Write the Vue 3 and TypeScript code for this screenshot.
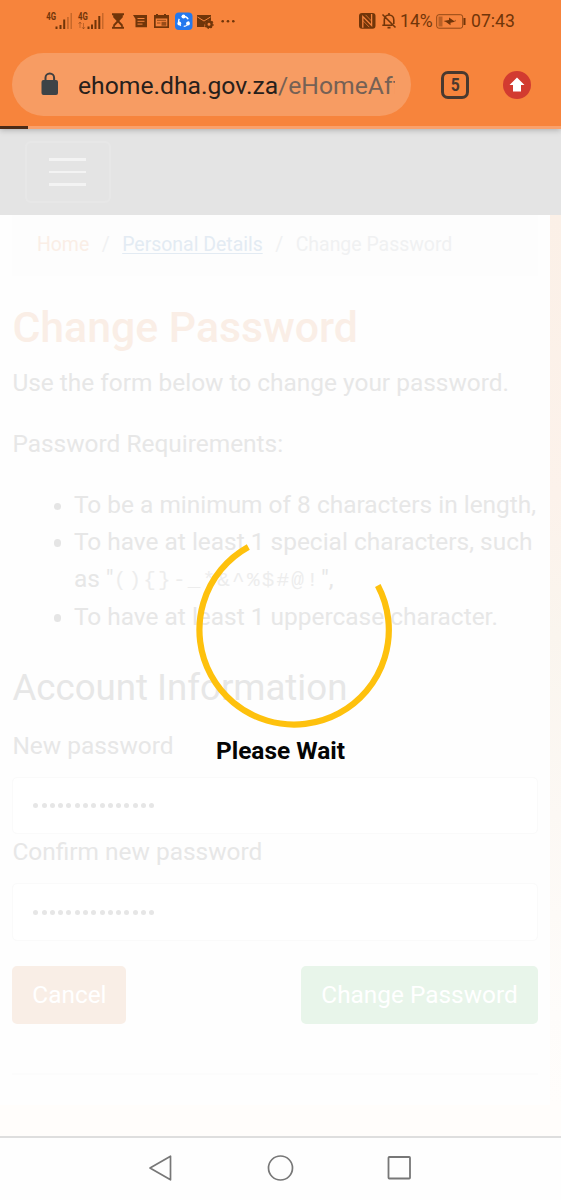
<script setup lang="ts">
const specials = '(){}-_*&^%$#@!'
const dotCount = 15
const fields: string[] = ['New password', 'Confirm new password']
</script>

<template>
  <div class="phone">
    <header class="chrome">
      <div class="status">
        <svg class="status-left" width="200" height="32" viewBox="0 0 200 32">
          <g fill="#713509">
            <text x="6.2" y="15" class="net" textLength="9.8" lengthAdjust="spacingAndGlyphs">4G</text>
            <path d="M15.5 21.5h2v2.500h-2zM19.500 20h2v4h-2zM23.200 14.500h2v9.500h-2z" />
            <path d="M27 12h1.800v12h-1.800zM30.500 8h1.500v16h-1.500z" opacity=".35" />
            <text x="38" y="15" class="net" textLength="9.800" lengthAdjust="spacingAndGlyphs">4G</text>
            <path d="M40 17v6m-1.500-4 1.500-2 1.500 2M43.500 18v6m-1.500-2 1.500 2 1.500-2" fill="none" stroke="#713509" opacity=".4" />
            <path d="M47.500 21.500h2v2.500h-2zM51 19.500h2v4.500h-2zM54.500 15h2v9h-2zM58.300 11h2v13h-2z" />
            <path d="M62 8h1.500v16H62z" opacity=".35" />
            <path d="M72 8.300h12v2h-1.200v2L79.300 16l3.500 3.800v2H84v2H72v-2h1.200v-2l3.500-3.800-3.500-3.700v-2H72z" />
            <path d="M78 17.500 74.800 21v.9h6.400V21z" fill="#f7843c" />
            <path d="M93 10h14v12.300H95.500V14z" />
            <path d="M97.500 13.500h7m-7 2.800h7m-7 2.800h5" stroke="#f7843c" stroke-width="1" />
            <path d="M114 10h2V9h2v1h6V9h2v1h3v13h-15z" />
            <path d="M115.700 13.500h11.600v7.800h-11.600z" fill="#f7843c" />
            <path d="M117 15.300h9M117 18h3.500" stroke="#713509" opacity=".7" />
            <path d="M121.500 16.800h4.800v3.900h-4.800z" opacity=".7" />
            <path d="M157 10h14v5.500a5.500 5.500 0 0 0-6.500 6.500H157z" />
            <path d="m157.500 12 6.500 4 6.500-4" fill="none" stroke="#f7843c" stroke-width="1" />
            <circle cx="169" cy="19.200" r="2.700" fill="none" stroke="#713509" stroke-width="2.400" />
            <circle cx="169" cy="19.200" r="4.100" fill="none" stroke="#713509" stroke-width="1.200" stroke-dasharray="1.600 1.540" />
            <circle cx="182.700" cy="16.200" r="1.300" /><circle cx="188" cy="16.200" r="1.300" /><circle cx="193.300" cy="16.200" r="1.300" />
          </g>
          <rect x="135" y="7.500" width="17.500" height="17.500" rx="4" fill="#2478ee" />
          <circle cx="143.600" cy="16.400" r="5" fill="none" stroke="#fff" stroke-width="1.400" stroke-dasharray="7.500 2.970" />
          <g fill="#fff"><circle cx="143.500" cy="11.500" r="1.900" /><circle cx="139.300" cy="18.500" r="1.900" /><circle cx="148" cy="18.500" r="1.900" /></g>
        </svg>
        <div class="status-right">
          <svg width="41" height="18" viewBox="0 0 41 18">
            <rect x="0" y="1" width="16.500" height="15.800" rx="3" fill="#713509" />
            <path d="M3.800 15.800V4.500l8.800 9V2" fill="none" stroke="#f7843c" stroke-width="1.300" />
            <path d="M6.500 2.800l6.100 6.300M3.800 8.500l6.500 6.700" stroke="#f7843c" stroke-width=".9" opacity=".8" />
            <path d="M25.300 13.200V8c0-3 2-5 4.700-5s4.800 2 4.800 5v4M23.300 13.200h10M30 3V1M28.500 15.600h3M23.500 2.500l13 13" fill="none" stroke="#713509" stroke-width="1.600" />
          </svg>
          <span class="pct">14%</span>
          <svg class="batt" width="30" height="15" viewBox="0 0 30 15">
            <rect x=".7" y=".7" width="26" height="13.500" rx="2.200" fill="none" stroke="#713509" stroke-width="1" opacity=".75" />
            <path d="M2.500 2.500h4v10h-4z" fill="#713509" opacity=".45" />
            <path d="m7.500 7 5.500-1V3.500L19.500 8V5.800l-1 1 1.500.7-5.500 1.200v2.500L10 8z" fill="#713509" />
            <path d="M28.500 4v7" stroke="#713509" stroke-width="2" />
          </svg>
          <span class="time">07:43</span>
        </div>
      </div>
      <div class="toolbar">
        <div class="address">
          <svg width="18" height="24" viewBox="0 0 18 24">
            <path d="M4.500 9V5.800a4.300 4.300 0 0 1 8.600 0V9" fill="none" stroke="#413f3f" stroke-width="2" />
            <rect x=".5" y="8" width="16.500" height="15" rx="2" fill="#3d4347" />
          </svg>
          <div class="url">ehome.dha.gov.za<span>/eHomeAff</span></div>
        </div>
        <div class="tabs"><span>5</span></div>
        <svg class="update" width="28" height="28" viewBox="0 0 28 28">
          <circle cx="14" cy="14" r="14" fill="#d23b30" />
          <path d="m14 6.500 7.500 7.500H18v6.500h-8V14H6.500z" fill="#fff" />
        </svg>
      </div>
      <div class="progress"><div class="progress-fill"></div></div>
    </header>

    <main class="page">
      <nav class="navbar">
        <button class="burger" aria-label="Menu"><i></i><i></i><i></i></button>
      </nav>
      <div class="backdrop">
        <div class="content">
          <div class="crumbs">
            <span class="home">Home</span><span class="sep">/</span><a>Personal Details</a><span class="sep">/</span><span class="current">Change Password</span>
          </div>
          <h1><span>Change Password</span></h1>
          <p class="lead">Use the form below to change your password.</p>
          <p class="req">Password Requirements:</p>
          <ul>
            <li>To be a minimum of 8 characters in length,</li>
            <li>To have at least 1 special characters, such<br /><span class="code-line">as "<code>{{ specials }}</code>",</span></li>
            <li>To have at least 1 uppercase character.</li>
          </ul>
          <h2>Account Information</h2>
          <div v-for="label in fields" :key="label" class="field">
            <label>{{ label }}</label>
            <div class="input"><b v-for="n in dotCount" :key="n"></b></div>
          </div>
          <div class="actions">
            <button class="btn cancel">Cancel</button>
            <button class="btn submit">Change Password</button>
          </div>
          <hr />
        </div>
      </div>
      <div class="loader">
        <svg width="200" height="200" viewBox="0 0 200 200">
          <path d="M54.300 17A94.700 94.700 0 1 0 183.800 55.500" fill="none" stroke="#fec10d" stroke-width="6.200" />
        </svg>
        <strong>Please Wait</strong>
      </div>
    </main>

    <footer class="system-nav">
      <svg width="26" height="28" viewBox="0 0 26 28"><path d="M22.500 2.200v23.600L2 14z" fill="none" stroke="#777" stroke-width="1.700" stroke-linejoin="round" /></svg>
      <svg width="28" height="28" viewBox="0 0 28 28"><circle cx="13.500" cy="14" r="12" fill="none" stroke="#777" stroke-width="1.700" /></svg>
      <svg width="26" height="28" viewBox="0 0 26 28"><rect x="1.500" y="3" width="21.500" height="21.500" rx=".8" fill="none" stroke="#777" stroke-width="1.800" /></svg>
    </footer>
  </div>
</template>

<style>
body { margin: 0; background: #fff; }
</style>

<style scoped>
* { box-sizing: border-box; }
.phone { width: 561px; height: 1200px; display: flex; flex-direction: column; overflow: hidden; font-family: Roboto, "Liberation Sans", sans-serif; font-size: 24.45px; line-height: 36.6px; color: #e7e7e7; }
.chrome { height: 129px; flex: none; background: #f7843c; display: flex; flex-direction: column; position: relative; z-index: 1; box-shadow: 0 1px 6px rgba(0,0,0,.25); }
.status { height: 42px; display: flex; justify-content: space-between; padding: 5px 46px 0 40px; color: #713509; }
.net { font: 700 10.5px Roboto, sans-serif; }
.status-right { display: flex; align-items: center; height: 32px; font-size: 17.6px; line-height: 32px; }
.status-right > svg { flex: none; }
.pct { width: 34px; padding-top: 0; }
.batt { margin-left: 2px; margin-right: 5px; }
.time { width: 44px; padding-top: 0; }
.toolbar { height: 85px; display: flex; align-items: center; padding: 2px 30px 0 12px; }
.address { width: 399px; height: 63px; border-radius: 32px; background: #f79c63; display: flex; align-items: center; padding: 0 16px 0 29px; }
.address svg { flex: none; margin-top: -1px; }
.url { margin-left: 19px; padding-top: 3px; width: 317px; overflow: hidden; white-space: nowrap; color: #27201b; font-size: 24.7px; line-height: 40px; }
.url span { color: #756155; }
.tabs { width: 28px; height: 28px; margin-left: 30px; border: 3px solid #49392f; border-radius: 7px; color: #49392f; font-size: 18.5px; font-weight: 700; line-height: 23px; text-align: center; }
.tabs span { display: inline-block; transform: scaleX(.85); }
.update { margin-left: 34px; }
.progress { height: 3px; margin-top: auto; background: #f9a16c; }
.progress-fill { width: 28px; height: 3px; background: #4c2b17; }
.page { height: 1007px; position: relative; flex: none; }
.navbar { height: 86px; background: #e4e4e4; padding: 12px 25px; }
.burger { width: 86px; height: 62px; padding: 0 22px; border: 2px solid #e7e7e7; border-radius: 6px; background: none; display: flex; flex-direction: column; justify-content: center; gap: 9.800px; }
.burger i { width: 37px; height: 2.500px; background: #f3f3f3; display: block; }
.backdrop { height: 921px; background: linear-gradient(#fbf0e7 0, #fcf2eb 280px, #faf5ee 420px, #fcf8f4 600px, #fefcfa 800px, #fffdfb 890px); }
.content { width: 550px; height: 890px; background: #fefefe; padding: 0 12px 0 12.400px; }
.crumbs { height: 61px; background: #fdfdfd; padding: 12px 24.500px 0; font-size: 19.450px; display: flex; white-space: nowrap; }
.home { color: #faeee6; }
.sep { width: 33px; text-align: center; color: #f0f1f2; }
.crumbs a { color: #e3ebf3; text-decoration: underline; text-decoration-thickness: 1px; text-underline-offset: 2px; }
.current { color: #f0f1f2; }
h1 { margin: 25.600px 0 12.200px; font-size: 42.800px; line-height: 51.600px; font-weight: 500; color: #faeee6; white-space: nowrap; }
p { margin: 0 0 24.400px; white-space: nowrap; }
ul { margin: 0; padding: 0 0 0 61.500px; white-space: nowrap; list-style: none; }
li { position: relative; }
li::before { content: ""; position: absolute; left: -20px; top: 15.500px; width: 7.500px; height: 7.500px; border-radius: 50%; background: #e5e5e5; }
.code-line { display: inline-block; height: 38.200px; line-height: 35.500px; vertical-align: top; }
code { font-family: "Liberation Mono", monospace; font-size: 21px; letter-spacing: 2.200px; color: #ededed; line-height: 1; position: relative; top: -1px; }
h2 { margin: 30.500px 0 18.200px; font-size: 36.650px; line-height: 43.900px; font-weight: 400; white-space: nowrap; }
.field { height: 106.500px; }
label { display: block; height: 36.600px; margin-bottom: 12.200px; }
.input { height: 57.700px; border: 1.500px solid #fafafa; border-radius: 5px; display: flex; align-items: center; gap: 3.270px; padding-left: 20px; background: #fff; }
.input b { width: 5px; height: 5px; border-radius: 50%; background: #e6e6e6; }
.actions { display: flex; justify-content: space-between; margin-top: 25px; }
.btn { height: 58px; border: 0; border-radius: 5px; color: #fff; font: 400 24.400px Roboto, sans-serif; padding: 0; white-space: nowrap; }
.cancel { width: 114px; background: #f9eee6; }
.submit { width: 237px; background: #e8f5ea; }
hr { margin: 49.500px 0 0; border: 0; height: 2px; background: #fcfcfc; }
.loader { position: absolute; left: 194px; top: 401px; width: 200px; color: #050505; }
.loader svg { display: block; }
.loader strong { display: block; width: 173px; margin-top: 3px; text-align: center; font-weight: 700; white-space: nowrap; }
.system-nav { height: 64px; border-top: 2px solid #dedede; background: #fefefe; display: flex; gap: 105px; padding: 15.500px 0 0 148px; flex: none; }
.system-nav svg:last-child { margin-left: -13px; }
.system-nav svg:nth-child(2) { margin-left: -12px; }
</style>
